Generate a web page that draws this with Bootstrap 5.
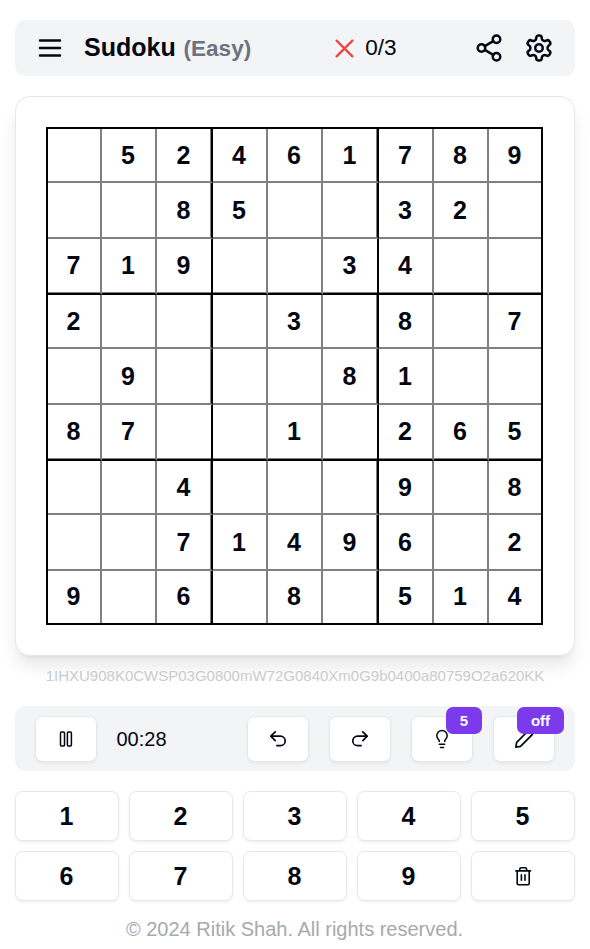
<!DOCTYPE html>
<html lang="en">
<head>
<meta charset="utf-8">
<meta name="viewport" content="width=device-width, initial-scale=1">
<title>Sudoku</title>
<link href="https://cdn.jsdelivr.net/npm/bootstrap@5.3.0/dist/css/bootstrap.min.css" rel="stylesheet">
<style>
body{font-family:"Liberation Sans",Arial,sans-serif;font-size:20px;line-height:28px;color:#030712;background:#fff;height:949px;overflow:hidden}
.app{padding:20px 15px 0}
.panel{background:#f3f4f6;border-radius:10px}
.topbar{height:56px;padding:0 21px 0 20px}
svg{display:block;fill:none;stroke:currentColor;stroke-linecap:round;stroke-linejoin:round;flex:none}
.title{font-size:25px;font-weight:700;margin-left:19px;color:#030712;white-space:nowrap}
.level{font-size:22.5px;color:#6b7280;margin-left:1px}
.errors{margin-left:80px;gap:7px;font-size:22.5px}
.cross{color:#ef4444}
.spaced{gap:20px}
.board-card{margin-top:20px;height:560px;padding:30px;border:1px solid #e5e7eb;border-radius:15px;background:#fff;box-shadow:0 12.5px 18.75px -3.75px rgba(0,0,0,.1),0 5px 7.5px -5px rgba(0,0,0,.1)}
.board{display:grid;width:497px;height:498px;border:2px solid #000;grid-template-columns:54px 55px 56px 55px 55px 56px 55px 55px 52px;grid-template-rows:54px 56px 56px 54px 56px 56px 54px 56px 52px;font-size:25px;font-weight:700}
.cell{display:flex;align-items:center;justify-content:center;border:0 solid gray;border-right-width:2px;border-bottom-width:2px;padding-right:1px}
.cell:nth-child(9n){border-right-width:0}
.cell:nth-child(n+73){border-bottom-width:0;padding-bottom:2px}
.cell:nth-child(9n+3),.cell:nth-child(9n+6){border-right-color:#000;box-shadow:inset -1px 0 gray}
.cell:nth-child(n+19):nth-child(-n+27),.cell:nth-child(n+46):nth-child(-n+54){border-bottom-color:#000;box-shadow:inset 0 -1px gray;padding-bottom:2px}
.cell:nth-child(21),.cell:nth-child(24),.cell:nth-child(48),.cell:nth-child(51){box-shadow:inset -1px -1px gray}
.code{margin-top:10px;height:20px;font-size:15px;line-height:20px;color:#c9cbcf;white-space:nowrap}
.controls{margin-top:20px;height:65px;padding:0 20px}
.timer{margin-left:19.5px}
.key{background:#fff;border:1px solid #e5e7eb;border-radius:7.5px;box-shadow:0 1.25px 2.5px rgba(0,0,0,.05);display:flex;align-items:center;justify-content:center;color:#030712;padding:0}
.tool{width:62px;height:46px}
.tip{position:absolute;top:-10px;right:-10px;height:27px;border-radius:7px;background:#7c3aed;color:#f9fafb;font-size:15px;font-weight:700;line-height:27px;text-align:center}
.tip-count{width:36px}
.tip-state{width:47px}
.pad{display:grid;grid-template-columns:repeat(5,104px);gap:10px;margin-top:20px}
.pad .key{height:50px;font-size:25px;font-weight:700;padding-right:1px}
.copy{margin-top:14px;color:#a5a9b0;padding-right:1px}
</style>
</head>
<body>
<main class="app">
<header class="panel topbar d-flex align-items-center">
<svg width="30" height="30" viewBox="0 0 24 24" stroke-width="2"><path d="M4 6h16M4 12h16M4 18h16"/></svg>
<div class="title">Sudoku <span class="level">(Easy)</span></div>
<div class="errors d-flex align-items-center"><svg class="cross" width="27" height="27" viewBox="0 0 24 24" stroke-width="2"><path d="M5 5l14 14M19 5L5 19"/></svg><span>0/3</span></div>
<div class="ms-auto d-flex spaced">
<svg width="30" height="30" viewBox="0 0 24 24" stroke-width="2"><circle cx="18" cy="5" r="3"/><circle cx="6" cy="12" r="3"/><circle cx="18" cy="19" r="3"/><path d="M8.6 13.5l6.8 4M15.4 6.5l-6.800 4"/></svg>
<svg width="30" height="30" viewBox="0 0 24 24" stroke-width="2"><path d="M12.220 2h-.440a2 2 0 0 0-2 2v.180a2 2 0 0 1-1 1.730l-.430.250a2 2 0 0 1-2 0l-.150-.080a2 2 0 0 0-2.730.730l-.220.380a2 2 0 0 0 .730 2.730l.150.100a2 2 0 0 1 1 1.720v.510a2 2 0 0 1-1 1.740l-.150.090a2 2 0 0 0-.730 2.730l.220.380a2 2 0 0 0 2.730.730l.150-.080a2 2 0 0 1 2 0l.430.250a2 2 0 0 1 1 1.730V20a2 2 0 0 0 2 2h.440a2 2 0 0 0 2-2v-.180a2 2 0 0 1 1-1.730l.430-.250a2 2 0 0 1 2 0l.150.080a2 2 0 0 0 2.730-.730l.220-.390a2 2 0 0 0-.730-2.730l-.150-.080a2 2 0 0 1-1-1.740v-.500a2 2 0 0 1 1-1.740l.150-.090a2 2 0 0 0 .730-2.730l-.220-.380a2 2 0 0 0-2.730-.730l-.150.080a2 2 0 0 1-2 0l-.430-.250a2 2 0 0 1-1-1.730V4a2 2 0 0 0-2-2z"/><circle cx="12" cy="12" r="3"/></svg>
</div>
</header>
<section class="board-card"><div class="board" id="board"></div></section>
<div class="code text-center">1IHXU908K0CWSP03G0800mW72G0840Xm0G9b0400a80759O2a620KK</div>
<section class="panel controls d-flex align-items-center">
<button class="key tool"><svg width="20" height="20" viewBox="0 0 20 20" stroke-width="1.5"><rect x="4.500" y="2.900" width="4" height="14" rx="1"/><rect x="11.400" y="2.900" width="4" height="14" rx="1"/></svg></button>
<span class="timer">00:28</span>
<div class="d-flex ms-auto spaced">
<button class="key tool"><svg width="20" height="20" viewBox="0 0 20 20" stroke-width="1.7"><path d="M7.200 2.800L2.800 7.200l4.400 4.400M2.800 7.200h9.700a4.700 4.700 0 0 1 0 9.400H8.900"/></svg></button>
<button class="key tool"><svg width="20" height="20" viewBox="0 0 20 20" stroke-width="1.7"><path d="M12.800 2.800L17.200 7.200l-4.400 4.400M17.200 7.200H7.500a4.700 4.700 0 0 0 0 9.400h3.600"/></svg></button>
<button class="key tool position-relative"><svg width="20" height="20" viewBox="0 0 20 20" stroke-width="1.5"><path d="M7.300 12.600V12c0-1.400-2.500-2.600-2.500-5.300a5.200 5.200 0 0 1 10.400 0c0 2.700-2.500 3.900-2.500 5.300v.6M7.300 15.200h5.400M8.500 18.500h3"/></svg><span class="tip tip-count">5</span></button>
<button class="key tool position-relative"><svg width="20" height="20" viewBox="0 0 20 20" stroke-width="1.7"><path d="M1.800 18.200l.9-4.800L14.500 1.500l4 3.800L6.500 17.300z"/></svg><span class="tip tip-state">off</span></button>
</div>
</section>
<section class="pad">
<button class="key">1</button><button class="key">2</button><button class="key">3</button><button class="key">4</button><button class="key">5</button>
<button class="key">6</button><button class="key">7</button><button class="key">8</button><button class="key">9</button>
<button class="key"><svg width="20" height="20" viewBox="0 0 20 20" stroke-width="1.6"><path d="M2.900 4.900h14.600M4.200 4.900v12.600q0 1.200 1.200 1.200h9.600q1.200 0 1.200-1.200V4.900M6.800 4.900V3q0-1.300 1.300-1.300h4.200q1.300 0 1.300 1.300v1.900M8.400 8.900v5.300M12 8.900v5.300"/></svg></button>
</section>
<footer class="copy text-center">© 2024 Ritik Shah. All rights reserved.</footer>
</main>
<script>
const puzzle = "052461789008500320719003400200030807090008100870010265004000908007149602906080514";
document.getElementById("board").innerHTML = [...puzzle].map(n => `<div class="cell">${n === "0" ? "" : n}</div>`).join("");
</script>
<script src="https://cdn.jsdelivr.net/npm/bootstrap@5.3.0/dist/js/bootstrap.bundle.min.js"></script>
</body>
</html>
